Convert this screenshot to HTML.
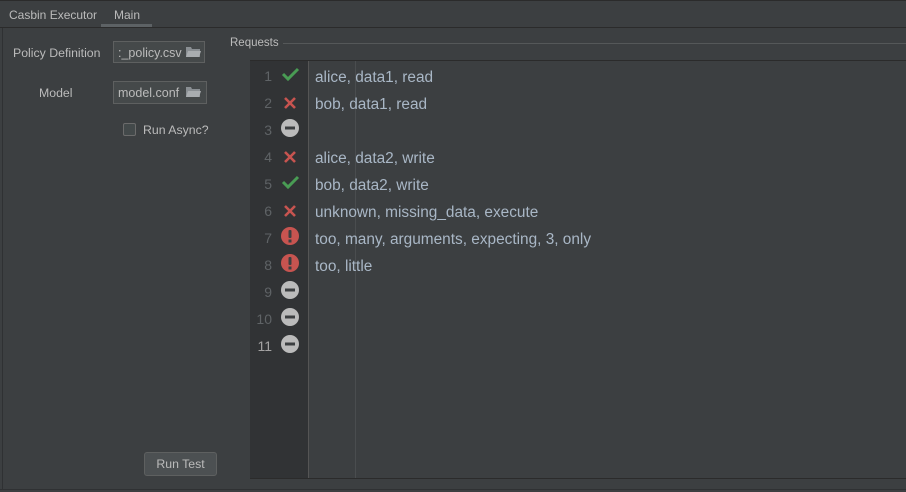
<!DOCTYPE html>
<html><head><style>
body{margin:0;width:906px;height:492px;background:#3c3f41;font-family:"Liberation Sans",sans-serif;overflow:hidden;position:relative;color:#bbbbbb}
.a{position:absolute}
</style></head><body>
<div class="a" style="left:0;top:0;width:906px;height:1px;background:#2b2b2b"></div>
<div class="a" style="left:9px;top:8px;font-size:12px">Casbin Executor</div>
<div class="a" style="left:114px;top:8px;font-size:12px">Main</div>
<div class="a" style="left:101px;top:24px;width:51px;height:3px;background:#5d6265"></div>
<div class="a" style="left:0;top:27px;width:906px;height:1px;background:#2b2b2b"></div>
<div class="a" style="left:2px;top:28px;width:1px;height:462px;background:#2f3133"></div>
<div class="a" style="left:0;top:489px;width:906px;height:1px;background:#2f3133"></div>

<div class="a" style="left:13px;top:46px;font-size:12.3px">Policy Definition</div>
<div class="a" style="left:113px;top:41px;width:92px;height:22px;border:1px solid #5e6060;background:#45494a;box-sizing:border-box"></div>
<div class="a" style="left:118px;top:46px;font-size:12.5px">:_policy.csv</div>
<svg class="a" style="left:185px;top:46px" width="17" height="12"><path d="M1 1h5l1 2h8v8H1z" fill="#8a8f93"/><path d="M3 5h13l-2 6H1z" fill="#a9adb0"/></svg>
<div class="a" style="left:39px;top:86px;font-size:12.3px">Model</div>
<div class="a" style="left:113px;top:81px;width:94px;height:23px;border:1px solid #5e6060;background:#45494a;box-sizing:border-box"></div>
<div class="a" style="left:118px;top:86px;font-size:12.5px">model.conf</div>
<svg class="a" style="left:185px;top:86px" width="17" height="12"><path d="M1 1h5l1 2h8v8H1z" fill="#8a8f93"/><path d="M3 5h13l-2 6H1z" fill="#a9adb0"/></svg>
<div class="a" style="left:123px;top:123px;width:13px;height:13px;border:1px solid #6b6b6b;background:#43494a;border-radius:2px;box-sizing:border-box"></div>
<div class="a" style="left:143px;top:123px;font-size:12.3px">Run Async?</div>
<div class="a" style="left:144px;top:452px;width:73px;height:24px;border:1px solid #5e6060;background:#4c5052;border-radius:3px;box-sizing:border-box;font-size:12.3px;text-align:center;line-height:22px">Run Test</div>

<div class="a" style="left:230px;top:37px;font-size:11.5px">Requests</div>
<div class="a" style="left:283px;top:43px;width:623px;height:1px;background:#555859"></div>
<div class="a" style="left:250px;top:60px;width:656px;height:1px;background:#2b2b2b"></div>
<div class="a" style="left:250px;top:61px;width:58px;height:418px;background:#313335"></div>
<div class="a" style="left:308px;top:61px;width:1px;height:418px;background:#555555"></div>
<div class="a" style="left:355px;top:61px;width:1px;height:418px;background:#4a4d4f"></div>
<div class="a" style="left:250px;top:478px;width:656px;height:1px;background:#2b2b2b"></div>

<div class="a" style="left:250px;top:63px;width:22px;text-align:right;font-size:14px;line-height:27px;color:#5f6366">1<br>2<br>3<br>4<br>5<br>6<br>7<br>8<br>9<br>10<br><span style="color:#a4a3a3">11</span></div>
<div class="a" style="left:315px;top:64px;font-size:15.4px;line-height:27px;color:#a9b7c6">alice, data1, read<br>bob, data1, read<br>&nbsp;<br>alice, data2, write<br>bob, data2, write<br>unknown, missing_data, execute<br>too, many, arguments, expecting, 3, only<br>too, little</div>

<svg class="a" style="left:280px;top:62px" width="22" height="300">
<defs>
<g id="ok"><path d="M2 8l5 5 10-10" stroke="#499c54" stroke-width="3" fill="none"/></g>
<g id="no"><path d="M4 4l10 10M14 4L4 14" stroke="#c75450" stroke-width="2.6"/></g>
<g id="mi"><circle cx="9" cy="9" r="9" fill="#bbbbbb"/><rect x="4" y="7.5" width="10" height="3" fill="#3c3f41"/></g>
<g id="ex"><circle cx="9" cy="9" r="9" fill="#c75450"/><rect x="7.5" y="3" width="3" height="8" rx="1" fill="#3c3f41"/><rect x="7.5" y="12.5" width="3" height="3" fill="#3c3f41"/></g>
</defs>
<use href="#ok" x="1" y="4"/>
<use href="#no" x="1" y="32"/>
<use href="#mi" x="1" y="57"/>
<use href="#no" x="1" y="86"/>
<use href="#ok" x="1" y="112"/>
<use href="#no" x="1" y="140"/>
<use href="#ex" x="1" y="165"/>
<use href="#ex" x="1" y="192"/>
<use href="#mi" x="1" y="219"/>
<use href="#mi" x="1" y="246"/>
<use href="#mi" x="1" y="273"/>
</svg>
</body></html>
